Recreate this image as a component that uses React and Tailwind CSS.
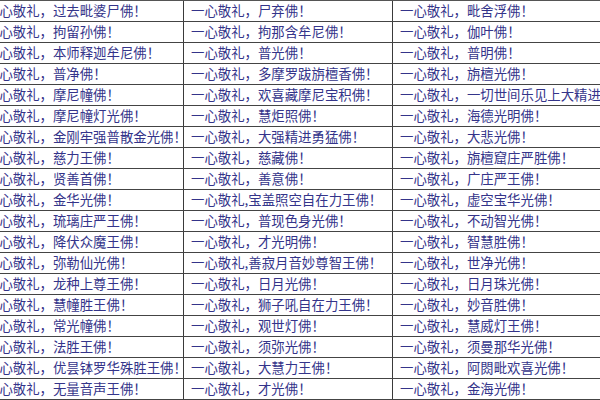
import React from "react";

const c1 = ["过去毗婆尸佛","拘留孙佛","本师释迦牟尼佛","普净佛","摩尼幢佛","摩尼幢灯光佛","金刚牢强普散金光佛","慈力王佛","贤善首佛","金华光佛","琉璃庄严王佛","降伏众魔王佛","弥勒仙光佛","龙种上尊王佛","慧幢胜王佛","常光幢佛","法胜王佛","优昙钵罗华殊胜王佛","无量音声王佛"];
const c2 = ["尸弃佛","拘那含牟尼佛","普光佛","多摩罗跋旃檀香佛","欢喜藏摩尼宝积佛","慧炬照佛","大强精进勇猛佛","慈藏佛","善意佛","宝盖照空自在力王佛","普现色身光佛","才光明佛","善寂月音妙尊智王佛","日月光佛","狮子吼自在力王佛","观世灯佛","须弥光佛","大慧力王佛","才光佛"];
const c3 = ["毗舍浮佛","伽叶佛","普明佛","旃檀光佛","一切世间乐见上大精进佛","海德光明佛","大悲光佛","旃檀窟庄严胜佛","广庄严王佛","虚空宝华光佛","不动智光佛","智慧胜佛","世净光佛","日月珠光佛","妙音胜佛","慧威灯王佛","须曼那华光佛","阿閦毗欢喜光佛","金海光佛"];

const narrow = new Set(["宝盖照空自在力王佛", "善寂月音妙尊智王佛"]);

function Cell({ name, w }) {
  const comma = narrow.has(name) ? "," : "，";
  return (
    <div className={`${w} shrink-0 h-full flex items-center pl-[7px] border-r border-[#3a3a3a] whitespace-nowrap overflow-hidden`}>
      <span>一心敬礼{comma}{name}！</span>
    </div>
  );
}

export default function App() {
  return (
    <div
      className="w-[600px] h-[400px] overflow-hidden bg-white text-[#34348a] text-[13.4px] leading-none"
      style={{ fontFamily: '"Noto Sans CJK SC", "Noto Sans", sans-serif' }}
    >
      <div className="ml-[-22px] border-t border-[#555]">
        {c1.map((n, i) => (
          <div key={i} className="flex h-[21px] border-b border-[#444] border-l">
            <Cell name={n} w="w-[205px]" />
            <Cell name={c2[i]} w="w-[209px]" />
            <Cell name={c3[i]} w="w-[230px]" />
          </div>
        ))}
      </div>
    </div>
  );
}
